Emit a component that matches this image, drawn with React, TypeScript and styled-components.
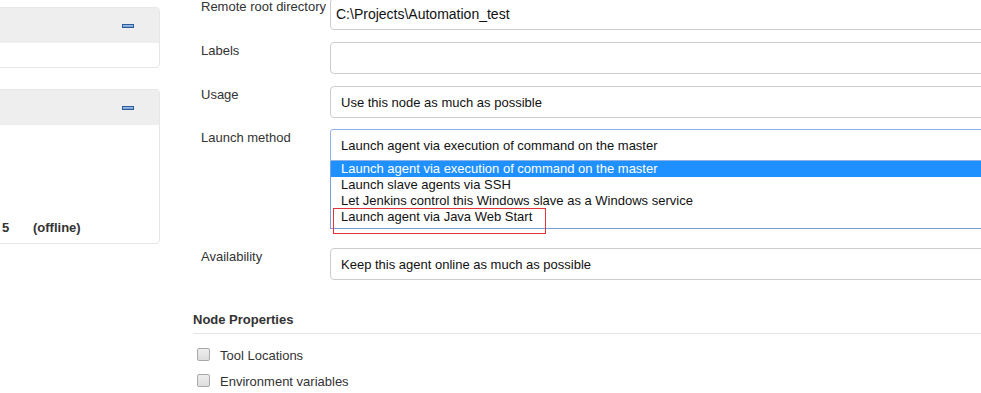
import styled, { createGlobalStyle } from 'styled-components';

const GlobalStyle = createGlobalStyle`
  html, body {
    margin: 0;
    padding: 0;
    background: #ffffff;
  }
  body {
    font-family: 'Liberation Sans', Arial, sans-serif;
    font-size: 13px;
    color: #333333;
    overflow: hidden;
  }
`;

const launchOptions = [
  'Launch agent via execution of command on the master',
  'Launch slave agents via SSH',
  'Let Jenkins control this Windows slave as a Windows service',
  'Launch agent via Java Web Start',
];

export default function App(): JSX.Element {
  return (
    <>
      <GlobalStyle />
      <Page>
        <Sidebar>
          <Panel>
            <PanelHeader>
              <MinimizeIcon />
            </PanelHeader>
            <PanelBody $height={24} />
          </Panel>
          <Panel>
            <PanelHeader>
              <MinimizeIcon />
            </PanelHeader>
            <PanelBody $height={118}>
              <ExecutorRow>
                <ExecutorNum>5</ExecutorNum>
                <span>(offline)</span>
              </ExecutorRow>
            </PanelBody>
          </Panel>
        </Sidebar>

        <Main>
          <Form>
            <FormRow>
              <FieldLabel>Remote root directory</FieldLabel>
              <TextBox>C:\Projects\Automation_test</TextBox>
            </FormRow>
            <FormRow>
              <FieldLabel>Labels</FieldLabel>
              <TextBox />
            </FormRow>
            <FormRow $tight>
              <FieldLabel>Usage</FieldLabel>
              <SelectBox>Use this node as much as possible</SelectBox>
            </FormRow>
            <FormRow>
              <FieldLabel>Launch method</FieldLabel>
              <div>
                <SelectBox $focused>{launchOptions[0]}</SelectBox>
                <OptionList>
                  {launchOptions.map((opt, i) => (
                    <OptionItem key={opt} $selected={i === 0}>
                      {opt}
                    </OptionItem>
                  ))}
                  <Highlight />
                </OptionList>
              </div>
            </FormRow>
            <FormRow>
              <FieldLabel>Availability</FieldLabel>
              <SelectBox>Keep this agent online as much as possible</SelectBox>
            </FormRow>
          </Form>

          <SectionTitle>Node Properties</SectionTitle>
          <CheckList>
            <CheckRow>
              <CheckBox />
              <span>Tool Locations</span>
            </CheckRow>
            <CheckRow>
              <CheckBox />
              <span>Environment variables</span>
            </CheckRow>
          </CheckList>
        </Main>
      </Page>
    </>
  );
}

const Page = styled.div`
  display: flex;
  width: 981px;
  height: 393px;
  overflow: hidden;
`;

const Sidebar = styled.div`
  flex: 0 0 170px;
  margin-left: -10px;
  padding-top: 7px;
  display: flex;
  flex-direction: column;
  gap: 21px;
`;

const Panel = styled.div`
  border: 1px solid #e6e6e6;
  border-radius: 4px;
  overflow: hidden;
  background: #ffffff;
`;

const PanelHeader = styled.div`
  height: 35px;
  background: #eeeeee;
  display: flex;
  align-items: center;
  justify-content: flex-end;
  padding-right: 25px;
`;

const MinimizeIcon = styled.span`
  display: block;
  width: 10px;
  height: 2px;
  border: 1px solid #2d5c9e;
  background: linear-gradient(#a9c6ea, #6f99d0);
`;

const PanelBody = styled.div<{ $height: number }>`
  height: ${(p) => p.$height}px;
  display: flex;
  flex-direction: column;
  justify-content: flex-end;
`;

const ExecutorRow = styled.div`
  display: flex;
  font-weight: bold;
  padding-left: 11px;
  padding-bottom: 7px;
  line-height: 16px;
`;

const ExecutorNum = styled.span`
  width: 31px;
`;

const Main = styled.div`
  flex: 0 0 820px;
  margin-left: 33px;
  margin-top: -2px;
`;

const Form = styled.div`
  display: flex;
  flex-direction: column;
  gap: 12px;
`;

const FormRow = styled.div<{ $tight?: boolean }>`
  display: grid;
  grid-template-columns: 129px 1fr;
  padding-left: 8px;
  margin-bottom: ${(p) => (p.$tight ? '-1px' : '0')};
`;

const FieldLabel = styled.div`
  line-height: 16px;
  padding-top: 1px;
`;

const TextBox = styled.div`
  box-sizing: border-box;
  height: 32px;
  border: 1px solid #cccccc;
  border-radius: 4px;
  padding: 0 5px;
  display: flex;
  align-items: center;
  color: #111111;
  font-size: 14px;
`;

const SelectBox = styled.div<{ $focused?: boolean }>`
  box-sizing: border-box;
  height: 32px;
  border: 1px solid ${(p) => (p.$focused ? '#8cb1e8' : '#cccccc')};
  border-radius: ${(p) => (p.$focused ? '3px 0 0 0' : '4px')};
  padding: 0 10px;
  display: flex;
  align-items: center;
  color: #111111;
`;

const OptionList = styled.div`
  position: relative;
  border: 1px solid #7b9fd8;
  border-top: none;
  padding-bottom: 3px;
  margin-bottom: 7px;
`;

const OptionItem = styled.div<{ $selected?: boolean }>`
  height: 16px;
  line-height: 16px;
  padding-left: 10px;
  background: ${(p) => (p.$selected ? '#1e90ff' : 'transparent')};
  color: ${(p) => (p.$selected ? '#ffffff' : '#111111')};
`;

const Highlight = styled.div`
  position: absolute;
  z-index: 2;
  left: 2px;
  top: 47px;
  width: 211px;
  height: 24px;
  border: 1px solid #e0343a;
`;

const SectionTitle = styled.div`
  margin-top: 32px;
  font-weight: bold;
  line-height: 16px;
  padding-bottom: 5px;
  border-bottom: 1px solid #e5e5e5;
`;

const CheckList = styled.div`
  display: flex;
  flex-direction: column;
  gap: 10px;
  padding-top: 14px;
  padding-left: 4px;
`;

const CheckRow = styled.label`
  display: flex;
  align-items: center;
  gap: 10px;
  height: 16px;
  line-height: 16px;
`;

const CheckBox = styled.span`
  box-sizing: border-box;
  width: 13px;
  height: 13px;
  margin-top: -3px;
  border: 1px solid #a9a9a9;
  border-radius: 2px;
  background: linear-gradient(#eeeeee, #dddddd);
`;
